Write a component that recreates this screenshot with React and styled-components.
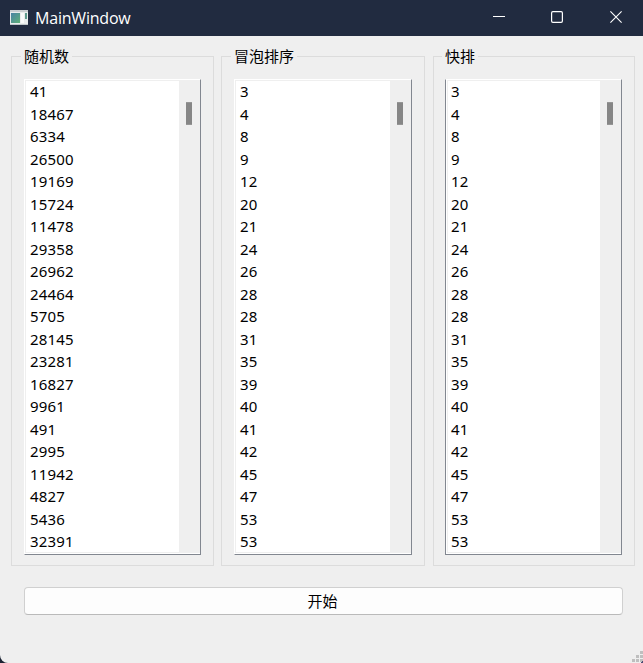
import React from "react";
import styled, { createGlobalStyle } from "styled-components";

const GlobalStyle = createGlobalStyle`
  * { box-sizing: border-box; }
  html, body { margin: 0; background: #1c2333; overflow: hidden; }
`;

const Window = styled.div`
  width: 643px;
  height: 663px;
  display: flex;
  flex-direction: column;
  background: #efefef;
  border-bottom-left-radius: 8px;
  overflow: hidden;
  color: #000;
  font: 15px/22.5px "Noto Sans", "Noto Sans CJK SC", sans-serif;
`;

const TitleBar = styled.header`
  height: 36px;
  flex: none;
  display: flex;
  align-items: center;
  margin-right: -2px;
  padding-left: 10px;
  background: #212b40;
  color: #fff;
`;

const AppIcon = styled.svg`
  width: 18px;
  height: 16px;
  flex: none;
  margin: -2px 7px 0 0;
`;

const Title = styled.span`
  flex: 1;
  margin-top: -1px;
  font: 16px/20px "Open Sans", "Noto Sans", sans-serif;
  letter-spacing: -0.2px;
`;

const Caption = styled.button`
  width: 58.5px;
  height: 36px;
  padding: 0 0 2px;
  border: 0;
  background: none;
  display: flex;
  align-items: center;
  justify-content: center;
  svg { display: block; }
`;

const Groups = styled.main`
  display: grid;
  grid-template-columns: 203px 204px 202px;
  column-gap: 7px;
  padding: 10px 0 0 11px;
  height: 530px;
  & > :last-child { margin-left: 1px; width: 202px; }
`;

const Group = styled.fieldset`
  min-width: 0;
  height: 520px;
  margin: 0;
  padding: 0 0 0 ${(p) => p.$inset}px;
  border: 1px solid #dcdcdc;
`;

const Legend = styled.legend`
  height: 20px;
  margin-left: -3px;
  padding: 0 3px;
  line-height: 21px;
  white-space: nowrap;
`;

const List = styled.div`
  width: ${(p) => p.$width}px;
  height: 476px;
  margin-top: 13px;
  display: flex;
  border: 1px solid #fff;
  border-right-color: #828790;
  border-bottom-color: #828790;
  border-left-color: ${(p) => (p.$edge ? "#828790" : "#fff")};
  background: #fff;
  padding: 0 0 1px ${(p) => (p.$edge ? 1 : 0)}px;
`;

const Rows = styled.ul`
  flex: 1;
  min-width: 0;
  margin: 0;
  padding: 0 0 0 ${(p) => (p.$edge ? 3 : 4)}px;
  list-style: none;
  border: 1px solid #efefef;
  border-right: 0;
  overflow: hidden;
  letter-spacing: 0.2px;
`;

const Row = styled.li`
  height: 22.5px;
  line-height: 21.3px;
`;

const ScrollTrack = styled.div`
  width: 21px;
  flex: none;
  padding: 22px 0 0 7px;
  background: #efefef;
`;

const ScrollThumb = styled.div`
  width: 6px;
  height: 23px;
  background: #868686;
  border: solid #969696;
  border-width: 1px 0;
`;

const Footer = styled.footer`
  flex: 1;
  display: flex;
  justify-content: space-between;
  padding: 21px 0 0 24px;
`;

const StartButton = styled.button`
  width: 599px;
  height: 28px;
  padding: 0 2px 0 0;
  border: 1px solid #d0d0d0;
  border-bottom-color: #bababa;
  border-radius: 4px;
  background: #fdfdfd;
  color: #000;
  font: inherit;
`;

const SizeGrip = styled.svg`
  width: 11px;
  height: 12px;
  align-self: flex-end;
`;

const random = [41, 18467, 6334, 26500, 19169, 15724, 11478, 29358, 26962, 24464, 5705, 28145, 23281, 16827, 9961, 491, 2995, 11942, 4827, 5436, 32391];
const sorted = [3, 4, 8, 9, 12, 20, 21, 24, 26, 28, 28, 31, 35, 39, 40, 41, 42, 45, 47, 53, 53];

const groups = [
  { title: "随机数", values: random, width: 177, inset: 12 },
  { title: "冒泡排序", values: sorted, width: 178, inset: 12 },
  { title: "快排", values: sorted, width: 177, inset: 11, edge: true },
];

function NumberGroup({ title, values, width, inset, edge }) {
  return (
    <Group $inset={inset}>
      <Legend>{title}</Legend>
      <List $width={width} $edge={edge}>
        <Rows $edge={edge}>
          {values.map((v, i) => (
            <Row key={i}>{v}</Row>
          ))}
        </Rows>
        <ScrollTrack>
          <ScrollThumb />
        </ScrollTrack>
      </List>
    </Group>
  );
}

export default function App() {
  return (
    <>
      <GlobalStyle />
      <Window>
        <TitleBar>
          <AppIcon viewBox="0 0 18 16">
            <defs>
              <linearGradient id="pane" x1="0" y1="0" x2="1" y2="1">
                <stop offset="0" stopColor="#4a83a4" />
                <stop offset="1" stopColor="#5fb078" />
              </linearGradient>
            </defs>
            <rect x="0" y="1" width="18" height="15" fill="#e9ecec" />
            <rect x="0" y="1" width="18" height="2" fill="#c9cdd0" />
            <rect x="1" y="4" width="9" height="10" fill="url(#pane)" />
            <rect x="11" y="4" width="3" height="10" fill="#fafafa" />
            <rect x="15" y="4" width="2" height="6" fill="#5d9a8c" />
            <rect x="0" y="15" width="18" height="1" fill="#bfc5c8" />
          </AppIcon>
          <Title>MainWindow</Title>
          <Caption aria-label="Minimize">
            <svg width="12" height="12" viewBox="0 0 12 12">
              <path d="M0 5.5H12" stroke="#fff" fill="none" />
            </svg>
          </Caption>
          <Caption aria-label="Maximize">
            <svg width="12" height="12" viewBox="0 0 12 12">
              <rect x=".6" y=".6" width="10.8" height="10.8" rx="1.3" stroke="#fff" strokeWidth="1.2" fill="none" />
            </svg>
          </Caption>
          <Caption aria-label="Close">
            <svg width="12" height="12" viewBox="0 0 12 12">
              <path d="M.4 .4L11.6 11.6M11.6 .4L.4 11.6" stroke="#fff" strokeWidth="1.1" fill="none" />
            </svg>
          </Caption>
        </TitleBar>
        <Groups>
          {groups.map((g) => (
            <NumberGroup key={g.title} {...g} />
          ))}
        </Groups>
        <Footer>
          <StartButton>开始</StartButton>
          <SizeGrip viewBox="0 0 11 12" fill="#bfbfbf">
            <path d="M8 0h3v3H8zM4 4h3v3H4zM8 4h3v3H8zM0 8h3v3H0zM4 8h3v3H4zM8 8h3v3H8z" />
            <path d="M10 10h1v2h-2v-1h1z" fill="#4a4a72" />
          </SizeGrip>
        </Footer>
      </Window>
    </>
  );
}
